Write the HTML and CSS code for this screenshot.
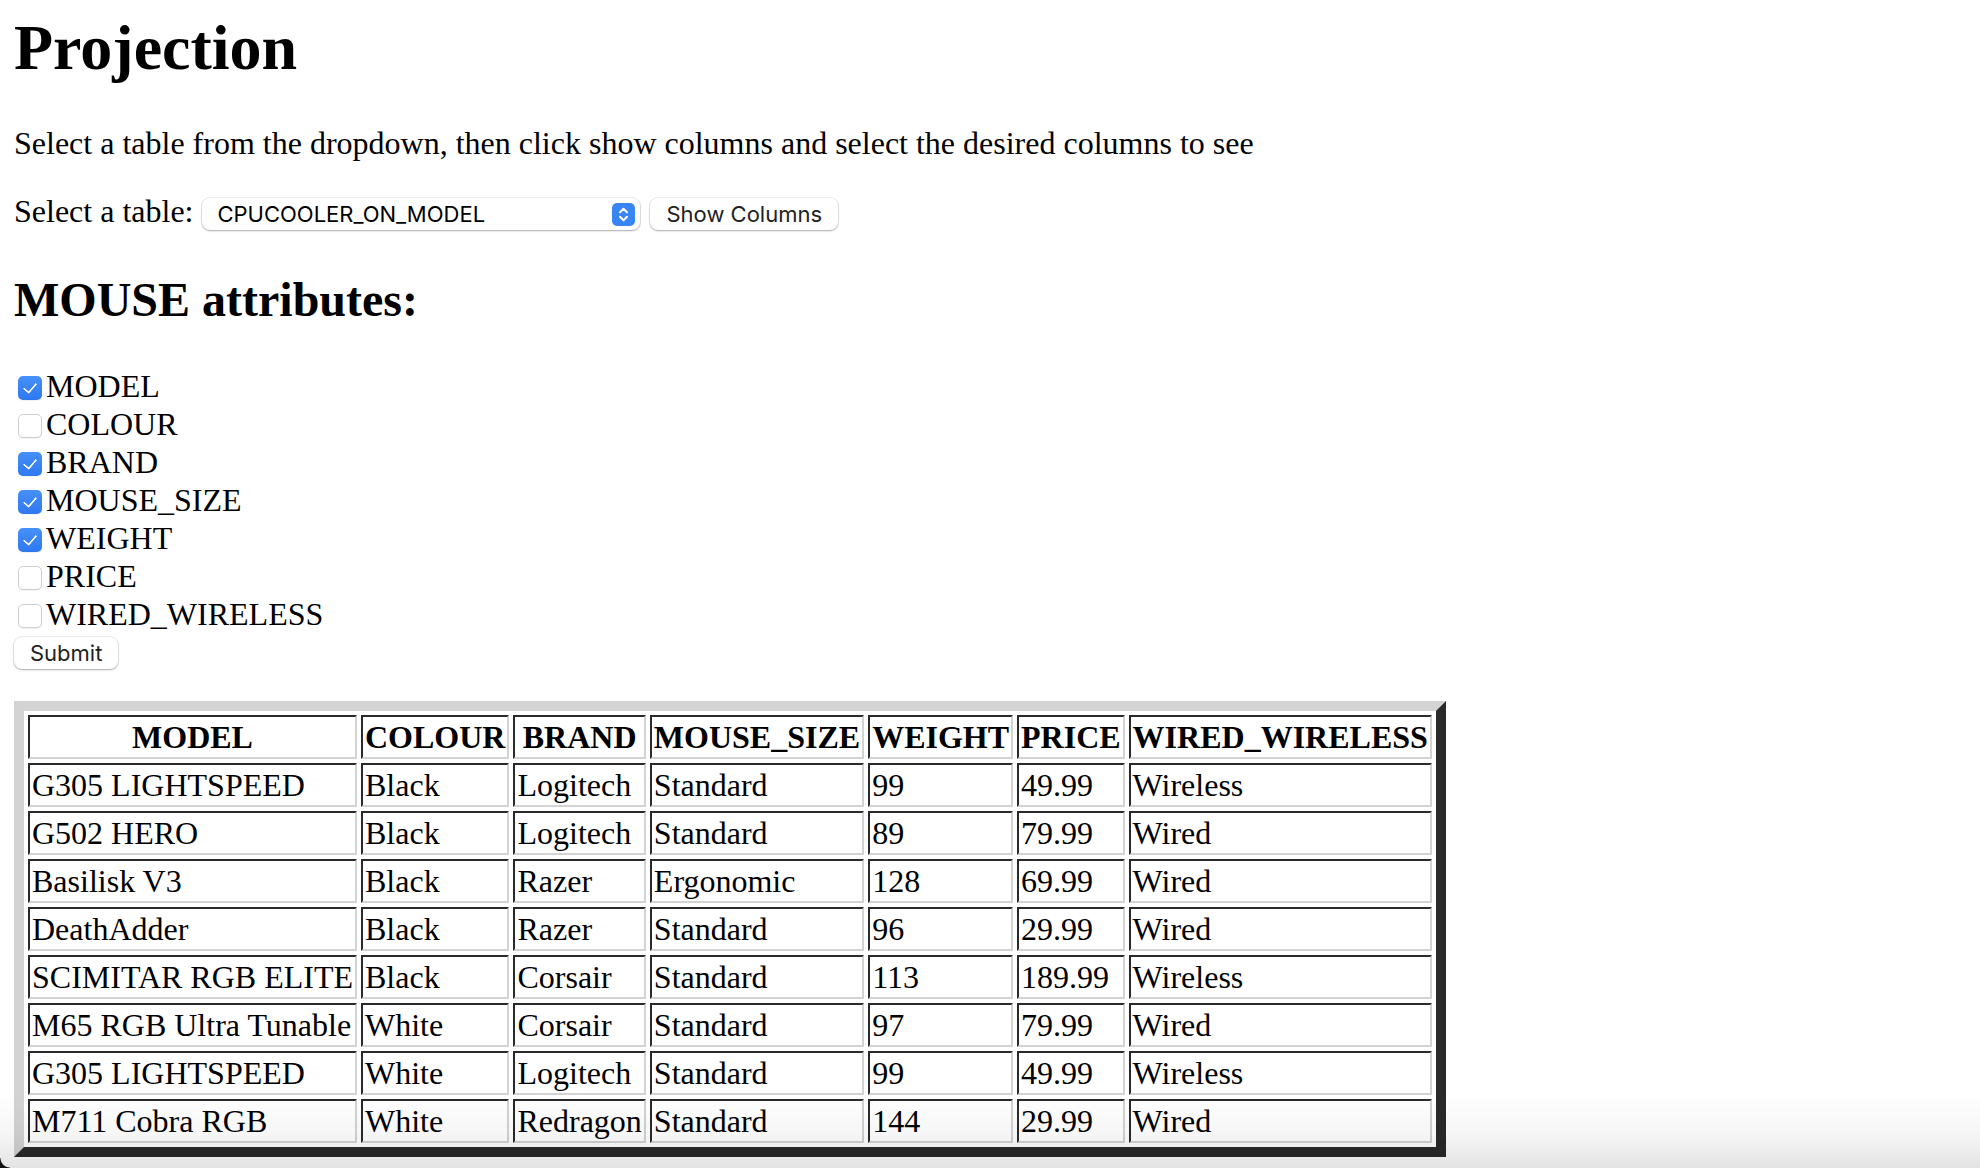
FILE: index.html
```html
<!DOCTYPE html>
<html lang="en">
<head>
<meta charset="utf-8">
<title>Projection</title>
<link rel="stylesheet" href="styles.css">
</head>
<body>
<main class="page">
  <h1 class="title">Projection</h1>
  <p class="intro">Select a table from the dropdown, then click show columns and select the desired columns to see</p>

  <form class="picker">
    <label class="picker-label" for="tbl">Select a table:</label>
    <span class="select-wrap">
      <select id="tbl" class="select">
        <option>CPUCOOLER_ON_MODEL</option>
        <option>MOUSE</option>
      </select>
      <svg class="select-arrows" width="23" height="23" viewBox="0 0 23 23" aria-hidden="true">
        <rect x="0" y="0" width="23" height="23" rx="5" fill="#3a85f5"/>
        <path d="M8 9.2 L11.5 5.8 L15 9.2" fill="none" stroke="#fff" stroke-width="2" stroke-linecap="round" stroke-linejoin="round"/>
        <path d="M8 13.8 L11.5 17.2 L15 13.8" fill="none" stroke="#fff" stroke-width="2" stroke-linecap="round" stroke-linejoin="round"/>
      </svg>
    </span>
    <button type="button" class="btn">Show Columns</button>
  </form>

  <h2 class="subtitle">MOUSE attributes:</h2>

  <form class="columns">
    <label class="opt"><input type="checkbox" class="cb" checked>MODEL</label>
    <label class="opt"><input type="checkbox" class="cb">COLOUR</label>
    <label class="opt"><input type="checkbox" class="cb" checked>BRAND</label>
    <label class="opt"><input type="checkbox" class="cb" checked>MOUSE_SIZE</label>
    <label class="opt"><input type="checkbox" class="cb" checked>WEIGHT</label>
    <label class="opt"><input type="checkbox" class="cb">PRICE</label>
    <label class="opt"><input type="checkbox" class="cb">WIRED_WIRELESS</label>
    <button type="button" class="btn btn-submit">Submit</button>
  </form>

  <table class="data">
    <thead>
      <tr><th>MODEL</th><th>COLOUR</th><th>BRAND</th><th>MOUSE_SIZE</th><th>WEIGHT</th><th>PRICE</th><th>WIRED_WIRELESS</th></tr>
    </thead>
    <tbody>
      <tr><td>G305 LIGHTSPEED</td><td>Black</td><td>Logitech</td><td>Standard</td><td>99</td><td>49.99</td><td>Wireless</td></tr>
      <tr><td>G502 HERO</td><td>Black</td><td>Logitech</td><td>Standard</td><td>89</td><td>79.99</td><td>Wired</td></tr>
      <tr><td>Basilisk V3</td><td>Black</td><td>Razer</td><td>Ergonomic</td><td>128</td><td>69.99</td><td>Wired</td></tr>
      <tr><td>DeathAdder</td><td>Black</td><td>Razer</td><td>Standard</td><td>96</td><td>29.99</td><td>Wired</td></tr>
      <tr><td>SCIMITAR RGB ELITE</td><td>Black</td><td>Corsair</td><td>Standard</td><td>113</td><td>189.99</td><td>Wireless</td></tr>
      <tr><td>M65 RGB Ultra Tunable</td><td>White</td><td>Corsair</td><td>Standard</td><td>97</td><td>79.99</td><td>Wired</td></tr>
      <tr><td>G305 LIGHTSPEED</td><td>White</td><td>Logitech</td><td>Standard</td><td>99</td><td>49.99</td><td>Wireless</td></tr>
      <tr><td>M711 Cobra RGB</td><td>White</td><td>Redragon</td><td>Standard</td><td>144</td><td>29.99</td><td>Wired</td></tr>
    </tbody>
  </table>
</main>
<div class="window-shade" aria-hidden="true"></div>
<div class="window-corner" aria-hidden="true"></div>
</body>
</html>
```

FILE: styles.css
```css
html, body {
  margin: 0;
  padding: 0;
  background: #fff;
}

body {
  font-family: "Liberation Serif", "Times New Roman", serif;
  font-size: 32px;
  color: #000;
}

.page {
  padding: 0 14px;
}

.title {
  font-size: 64px;
  font-weight: bold;
  line-height: normal;
  margin: 11px 0 40px;
}

.intro {
  margin: 0;
  line-height: normal;
}

.picker {
  display: flex;
  align-items: flex-start;
  margin: 31px 0 0;
}

.picker-label {
  line-height: normal;
  margin-right: 9px;
}

.select-wrap {
  position: relative;
  display: flex;
  margin-top: 5px;
}

.select {
  appearance: none;
  -webkit-appearance: none;
  display: block;
  width: 438px;
  height: 32px;
  box-sizing: border-box;
  border: none;
  border-radius: 8px;
  background: #fff;
  box-shadow: 0 0 0 1px rgba(0, 0, 0, 0.07), 0 1px 2px rgba(0, 0, 0, 0.28);
  font-family: Inter, "Open Sans", sans-serif;
  font-size: 22px;
  color: #000;
  padding: 0 40px 0 15px;
  margin: 0;
  outline: none;
}

.select-arrows {
  position: absolute;
  top: 4.5px;
  right: 5px;
  pointer-events: none;
}

.btn {
  appearance: none;
  -webkit-appearance: none;
  height: 32px;
  box-sizing: border-box;
  border: none;
  border-radius: 8px;
  background: #fff;
  box-shadow: 0 0 0 1px rgba(0, 0, 0, 0.07), 0 1px 2px rgba(0, 0, 0, 0.28);
  font-family: Inter, "Open Sans", sans-serif;
  font-size: 22px;
  color: #222;
  padding: 0 16px;
  margin: 5px 0 0 10px;
  line-height: 32px;
}

.subtitle {
  font-size: 48px;
  font-weight: bold;
  line-height: normal;
  margin: 42px 0 40px;
}

.columns {
  margin: 0;
  display: flex;
  flex-direction: column;
  align-items: flex-start;
}

.opt {
  display: flex;
  align-items: center;
  height: 38px;
  line-height: normal;
}

.cb {
  appearance: none;
  -webkit-appearance: none;
  position: relative;
  width: 24px;
  height: 24px;
  box-sizing: border-box;
  margin: 3px 4px 0 4px;
  border-radius: 5px;
  border: 1px solid #cfcfcf;
  background: #fff;
  box-shadow: 0 1px 1px rgba(0, 0, 0, 0.06);
}

.cb:checked {
  border: none;
  background: linear-gradient(#4690f8, #2f78f0);
}

.cb:checked::after {
  content: "";
  position: absolute;
  left: 8px;
  top: 4px;
  width: 6px;
  height: 11px;
  border-right: 2.6px solid #fff;
  border-bottom: 2.6px solid #fff;
  border-radius: 1px;
  transform: rotate(40deg);
}

.btn-submit {
  margin: 4px 0 0 0;
  padding: 0 16px;
}

.data {
  margin-top: 32px;
  border-collapse: separate;
  border-spacing: 4px;
  border-style: solid;
  border-width: 10px;
  border-color: #d3d3d3 #2a2a2a #2a2a2a #d3d3d3;
  font-size: 32px;
}

.data th,
.data td {
  padding: 2px;
  line-height: 36px;
  border-style: solid;
  border-width: 2px;
  border-color: #2a2a2a #d3d3d3 #d3d3d3 #2a2a2a;
  white-space: nowrap;
}

.data th {
  font-weight: bold;
  text-align: center;
}

.data td {
  text-align: left;
}

.window-shade {
  position: fixed;
  left: 0;
  right: 0;
  bottom: 0;
  height: 76px;
  background: linear-gradient(to bottom, rgba(0, 0, 0, 0) 0%, rgba(0, 0, 0, 0.035) 55%, rgba(0, 0, 0, 0.11) 100%);
  pointer-events: none;
}

.window-corner {
  position: fixed;
  left: 0;
  bottom: 0;
  width: 10px;
  height: 10px;
  background: radial-gradient(circle at 100% 0, rgba(0, 0, 0, 0) 9px, #111 10px);
  pointer-events: none;
}
```
